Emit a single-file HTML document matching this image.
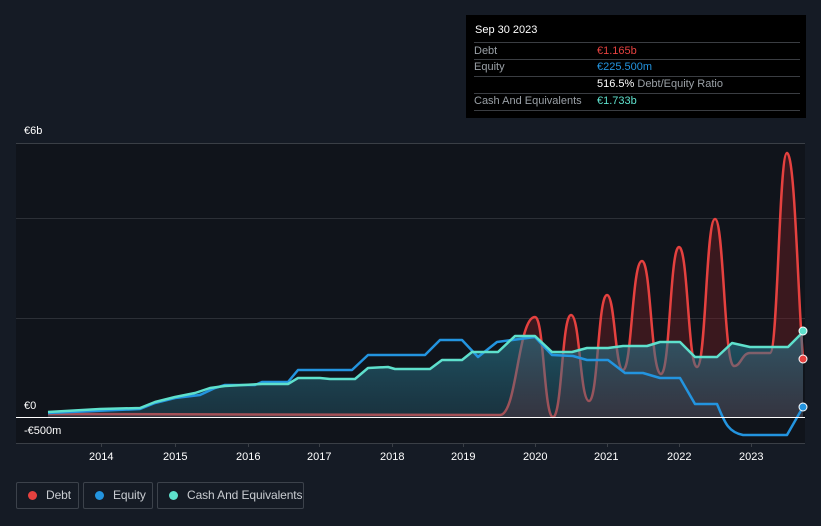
<!DOCTYPE html>
<html><head><meta charset="utf-8"><style>
body{margin:0;width:821px;height:526px;background:#151b25;font-family:"Liberation Sans",sans-serif;overflow:hidden;position:relative}
.t{position:absolute;color:#fff;font-size:11px}
.tip{position:absolute;left:466px;top:15px;width:340px;height:103px;background:#000;}
.row{position:absolute;left:8px;width:326px;border-bottom:1px solid #3a3d42;font-size:11px;color:#9aa0a6}
.leg{position:absolute;top:482px;height:27px;border:1px solid #3c424b;border-radius:2px;color:#c9ccd1;font-size:12px;line-height:25px;box-sizing:border-box;white-space:nowrap;letter-spacing:-0.1px}
.dot{display:inline-block;width:9px;height:9px;border-radius:50%;margin:0 9px 0 11px;vertical-align:-1px}
</style></head><body>
<svg width="821" height="526" style="position:absolute;left:0;top:0">
<defs>
<linearGradient id="gb" x1="0" y1="0" x2="0" y2="1"><stop offset="0" stop-color="#2a7f96" stop-opacity=".6"/><stop offset="1" stop-color="#2a6a80" stop-opacity=".35"/></linearGradient>
</defs>
<rect x="16" y="143" width="789" height="300" fill="#10141b"/>
<line x1="16" y1="143.5" x2="805" y2="143.5" stroke="#3a3f46"/>
<line x1="16" y1="218.5" x2="805" y2="218.5" stroke="#2c3037"/>
<line x1="16" y1="318.5" x2="805" y2="318.5" stroke="#2c3037"/>
<line x1="16" y1="443.5" x2="805" y2="443.5" stroke="#3a3f46"/>
<g stroke="#3a3f46"><line x1="101.5" y1="443" x2="101.5" y2="447"/><line x1="175.5" y1="443" x2="175.5" y2="447"/><line x1="248.5" y1="443" x2="248.5" y2="447"/><line x1="319.5" y1="443" x2="319.5" y2="447"/><line x1="392.5" y1="443" x2="392.5" y2="447"/><line x1="463.5" y1="443" x2="463.5" y2="447"/><line x1="535.5" y1="443" x2="535.5" y2="447"/><line x1="607.5" y1="443" x2="607.5" y2="447"/><line x1="679.5" y1="443" x2="679.5" y2="447"/><line x1="751.5" y1="443" x2="751.5" y2="447"/></g>
<path d="M48 414 L500 415 C517 415 518 317 535 317 C544 317 544 417 553 417 C562 417 562 315 571 315 C580 315 580 401 589 401 C598 401 598 295 607 295 C615 295 615 370 623 370 C632 370 632 261 642 261 C651 261 651 374 661 374 C670 374 670 247 679 247 C688 247 688 367 697 367 C706 367 706 219 715 219 C724 219 724 366 734 366 C741 366 742 353 750 353 L770 353 C778 353 779 153 787 153 C795 153 798 300 803 359 L803 417 L48 417Z" fill="#7a1e24" fill-opacity=".4"/>
<path d="M48 414 L500 415 C517 415 518 317 535 317 C544 317 544 417 553 417 C562 417 562 315 571 315 C580 315 580 401 589 401 C598 401 598 295 607 295 C615 295 615 370 623 370 C632 370 632 261 642 261 C651 261 651 374 661 374 C670 374 670 247 679 247 C688 247 688 367 697 367 C706 367 706 219 715 219 C724 219 724 366 734 366 C741 366 742 353 750 353 L770 353 C778 353 779 153 787 153 C795 153 798 300 803 359" fill="none" stroke="#e5413f" stroke-width="2.5"/>
<path d="M48 412 L100 409 L140 408 L155 402 L175 397 L195 393 L210 388 L225 386 L262 384 L288 384 L298 378 L320 378 L330 379 L355 379 L368 368 L388 367 L395 369 L430 369 L442 360 L462 360 L472 352 L498 352 L515 336 L535 336 L552 352 L572 352 L587 348 L608 348 L623 346 L647 346 L660 342 L680 342 L695 357 L717 357 L732 343 L750 347 L788 347 L803 332 L803 417 L48 417Z" fill="url(#gb)"/>
<path d="M48 413 L140 409 L155 403 L175 398 L200 395 L215 388 L225 385 L255 385 L262 382 L288 382 L298 370 L352 370 L368 355 L425 355 L440 340 L462 340 L478 357 L497 342 L535 337 L552 355 L573 356 L587 360 L608 360 L625 373 L643 373 L660 378 L680 378 L695 404 L717 404 C724 420 727 432 743 435 L787 435 L803 407" fill="none" stroke="#2394df" stroke-width="2.5" stroke-linejoin="round"/>
<path d="M48 412 L100 409 L140 408 L155 402 L175 397 L195 393 L210 388 L225 386 L262 384 L288 384 L298 378 L320 378 L330 379 L355 379 L368 368 L388 367 L395 369 L430 369 L442 360 L462 360 L472 352 L498 352 L515 336 L535 336 L552 352 L572 352 L587 348 L608 348 L623 346 L647 346 L660 342 L680 342 L695 357 L717 357 L732 343 L750 347 L788 347 L803 332" fill="none" stroke="#5ee0cc" stroke-width="2.5" stroke-linejoin="round"/>
<line x1="16" y1="417.5" x2="805" y2="417.5" stroke="#fff" stroke-width="1"/>
<circle cx="803" cy="359" r="4" fill="#e5413f" stroke="#fff" stroke-width="1"/>
<circle cx="803" cy="407" r="4" fill="#2394df" stroke="#fff" stroke-width="1"/>
<circle cx="803" cy="331" r="4" fill="#5ee0cc" stroke="#fff" stroke-width="1"/>
</svg>
<div class="t" style="left:24px;top:125px">€6b</div>
<div class="t" style="left:24px;top:400px">€0</div>
<div class="t" style="left:24px;top:425px">-€500m</div>
<div class="t" style="left:89px;top:451px">2014</div>
<div class="t" style="left:163px;top:451px">2015</div>
<div class="t" style="left:236px;top:451px">2016</div>
<div class="t" style="left:307px;top:451px">2017</div>
<div class="t" style="left:380px;top:451px">2018</div>
<div class="t" style="left:451px;top:451px">2019</div>
<div class="t" style="left:523px;top:451px">2020</div>
<div class="t" style="left:594px;top:451px">2021</div>
<div class="t" style="left:667px;top:451px">2022</div>
<div class="t" style="left:739px;top:451px">2023</div>
<div class="tip">
<div style="position:absolute;left:9px;top:9px;color:#fff;font-size:11px">Sep 30 2023</div>
<div class="row" style="top:27px;height:16px;border-top:1px solid #3a3d42;line-height:16px">Debt<span style="position:absolute;left:123px;color:#e5413f">€1.165b</span></div>
<div class="row" style="top:44px;height:17px;line-height:16px">Equity<span style="position:absolute;left:123px;color:#2394df">€225.500m</span></div>
<div class="row" style="top:62px;height:16px;line-height:15px;border:none;border-bottom:1px solid #3a3d42"><span style="position:absolute;left:123px;"><b style="color:#fff;font-weight:normal">516.5%</b> Debt/Equity Ratio</span></div>
<div class="row" style="top:79px;height:16px;line-height:15px">Cash And Equivalents<span style="position:absolute;left:123px;color:#5ee0cc">€1.733b</span></div>
</div>
<div class="leg" style="left:16px;width:63px"><span class="dot" style="background:#e5413f"></span>Debt</div>
<div class="leg" style="left:83px;width:70px"><span class="dot" style="background:#2394df"></span>Equity</div>
<div class="leg" style="left:157px;width:147px"><span class="dot" style="background:#5ee0cc"></span>Cash And Equivalents</div>
</body></html>
